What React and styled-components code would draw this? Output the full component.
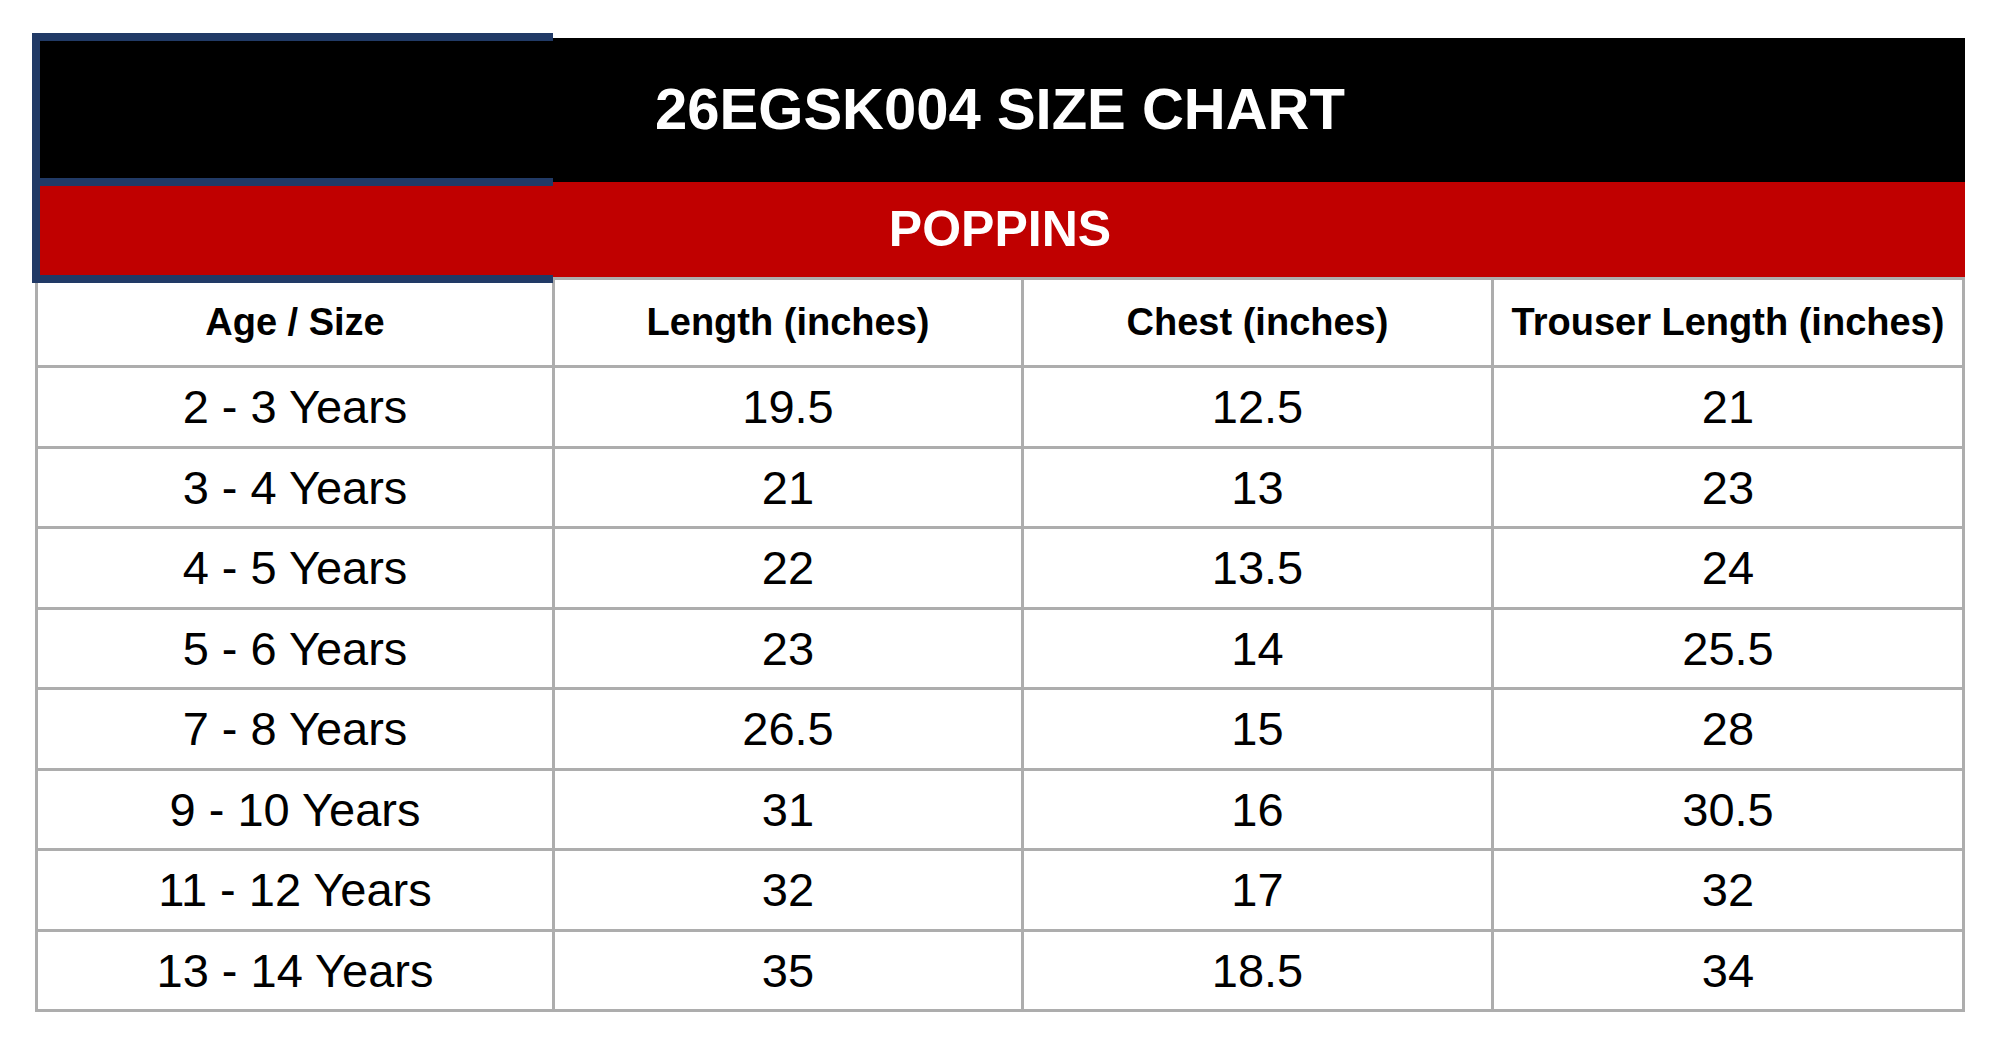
import React from 'react'
import styled, { createGlobalStyle } from 'styled-components'

const rows = [
    ['2 - 3 Years', '19.5', '12.5', '21'],
    ['3 - 4 Years', '21', '13', '23'],
    ['4 - 5 Years', '22', '13.5', '24'],
    ['5 - 6 Years', '23', '14', '25.5'],
    ['7 - 8 Years', '26.5', '15', '28'],
    ['9 - 10 Years', '31', '16', '30.5'],
    ['11 - 12 Years', '32', '17', '32'],
    ['13 - 14 Years', '35', '18.5', '34'],
]

const headings = ['Age / Size', 'Length (inches)', 'Chest (inches)', 'Trouser Length (inches)']

export default function App() {
    return (
        <>
            <GlobalStyle />
            <Page>
                <Chart>
                    <TitleBand>26EGSK004 SIZE CHART</TitleBand>
                    <BrandBand>POPPINS</BrandBand>
                    <Table>
                        <colgroup>
                            <col style={{ width: 514 }} />
                            <col style={{ width: 466 }} />
                            <col style={{ width: 467 }} />
                            <col style={{ width: 468 }} />
                        </colgroup>
                        <thead>
                            <tr>
                                {headings.map((h) => <HeadCell key={h}>{h}</HeadCell>)}
                            </tr>
                        </thead>
                        <tbody>
                            {rows.map((r) => (
                                <tr key={r[0]}>
                                    {r.map((v, i) => <Cell key={i}>{v}</Cell>)}
                                </tr>
                            ))}
                        </tbody>
                    </Table>
                    <Selection />
                    <SelectionDivider />
                </Chart>
            </Page>
        </>
    )
}

const GlobalStyle = createGlobalStyle`
    html, body {
        margin: 0;
        padding: 0;
        background: #fff;
    }
    body {
        font-family: "Liberation Sans", Arial, sans-serif;
        color: #000;
    }
`

const Page = styled.div`
    width: 2010px;
    height: 1051px;
    padding: 38px 0 0 35px;
    box-sizing: border-box;
    overflow: hidden;
`

const Chart = styled.div`
    position: relative;
    width: 1930px;
`

const TitleBand = styled.div`
    height: 144px;
    background: #000;
    color: #fff;
    font-size: 58px;
    font-weight: 700;
    display: flex;
    align-items: center;
    justify-content: center;
    padding-bottom: 4px;
    box-sizing: border-box;
`

const BrandBand = styled.div`
    height: 95px;
    background: #c00000;
    color: #fff;
    font-size: 50px;
    font-weight: 700;
    display: flex;
    align-items: center;
    justify-content: center;
    padding-bottom: 2px;
    box-sizing: border-box;
`

const Table = styled.table`
    width: 1930px;
    table-layout: fixed;
    border-collapse: separate;
    border-spacing: 3px;
    background: #adadad;
`

const HeadCell = styled.th`
    height: 85px;
    padding: 0;
    background: #fff;
    font-size: 38px;
    font-weight: 700;
    text-align: center;
    white-space: nowrap;
`

const Cell = styled.td`
    height: 77.5px;
    padding: 0;
    background: #fff;
    font-size: 47px;
    font-weight: 400;
    text-align: center;
    white-space: nowrap;
`

/* navy outline left over the first column of the banner, like a selected cell range */
const Selection = styled.div`
    position: absolute;
    left: -3px;
    top: -5px;
    width: 521px;
    height: 250px;
    border: 8px solid #213a66;
    border-right: none;
    box-sizing: border-box;
    pointer-events: none;
`

const SelectionDivider = styled.div`
    position: absolute;
    left: -3px;
    top: 140px;
    width: 521px;
    height: 8px;
    background: #213a66;
`
